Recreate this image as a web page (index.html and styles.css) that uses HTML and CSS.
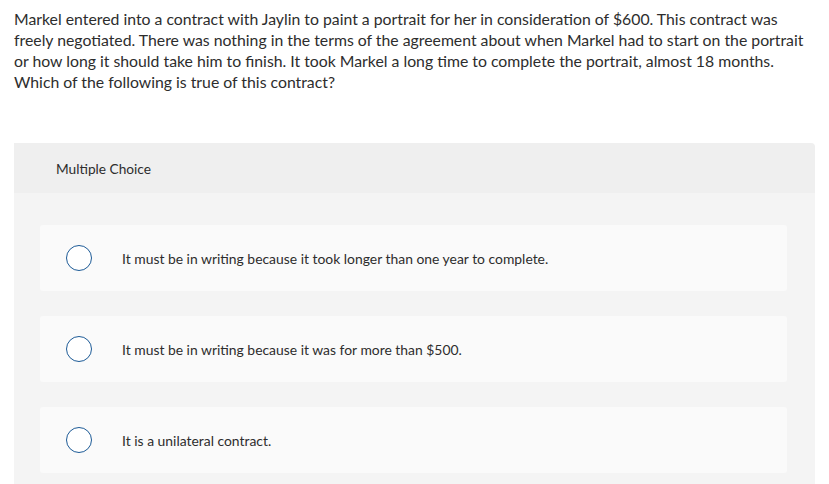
FILE: index.html
```html
<!DOCTYPE html>
<html>
<head>
<meta charset="utf-8">
<link rel="stylesheet" href="styles.css">
</head>
<body>
<div class="page">
  <p class="question">Markel entered into a contract with Jaylin to paint a portrait for her in consideration of $600. This contract was freely negotiated. There was nothing in the terms of the agreement about when Markel had to start on the portrait or how long it should take him to finish. It took Markel a long time to complete the portrait, almost 18 months. Which of the following is true of this contract?</p>
  <div class="panel">
    <div class="panel-head">Multiple Choice</div>
    <div class="panel-body">
      <div class="option"><span class="radio"></span><span class="label">It must be in writing because it took longer than one year to complete.</span></div>
      <div class="option"><span class="radio"></span><span class="label">It must be in writing because it was for more than $500.</span></div>
      <div class="option"><span class="radio"></span><span class="label">It is a unilateral contract.</span></div>
    </div>
  </div>
</div>
</body>
</html>
```
FILE: styles.css
```css
html, body { margin: 0; padding: 0; background: #fff; }
body { font-family: "Lato", "Roboto", sans-serif; color: #2d2d2d; }
.page { padding: 8px 14px 0 14px; }
.question { margin: 0; font-size: 15.8px; line-height: 21px; width: 801px; }
.panel { margin-top: 51px; width: 801px; border-radius: 0 4px 0 0; overflow: hidden; }
.panel-head { background: #efefef; height: 50px; display: flex; align-items: center; padding-left: 42px; font-size: 13.7px; }
.panel-body { background: #f4f4f4; padding: 32px 28px 12px 26px; display: flex; flex-direction: column; gap: 25px; }
.option { background: #fafafa; height: 66px; border-radius: 3px; display: flex; align-items: center; padding-left: 26px; }
.radio { width: 24px; height: 24px; border: 1.5px solid #1c5a96; border-radius: 50%; background: #fff; flex: none; }
.label { margin-left: 30px; font-size: 13.9px; color: #2d2d2d; }
```
